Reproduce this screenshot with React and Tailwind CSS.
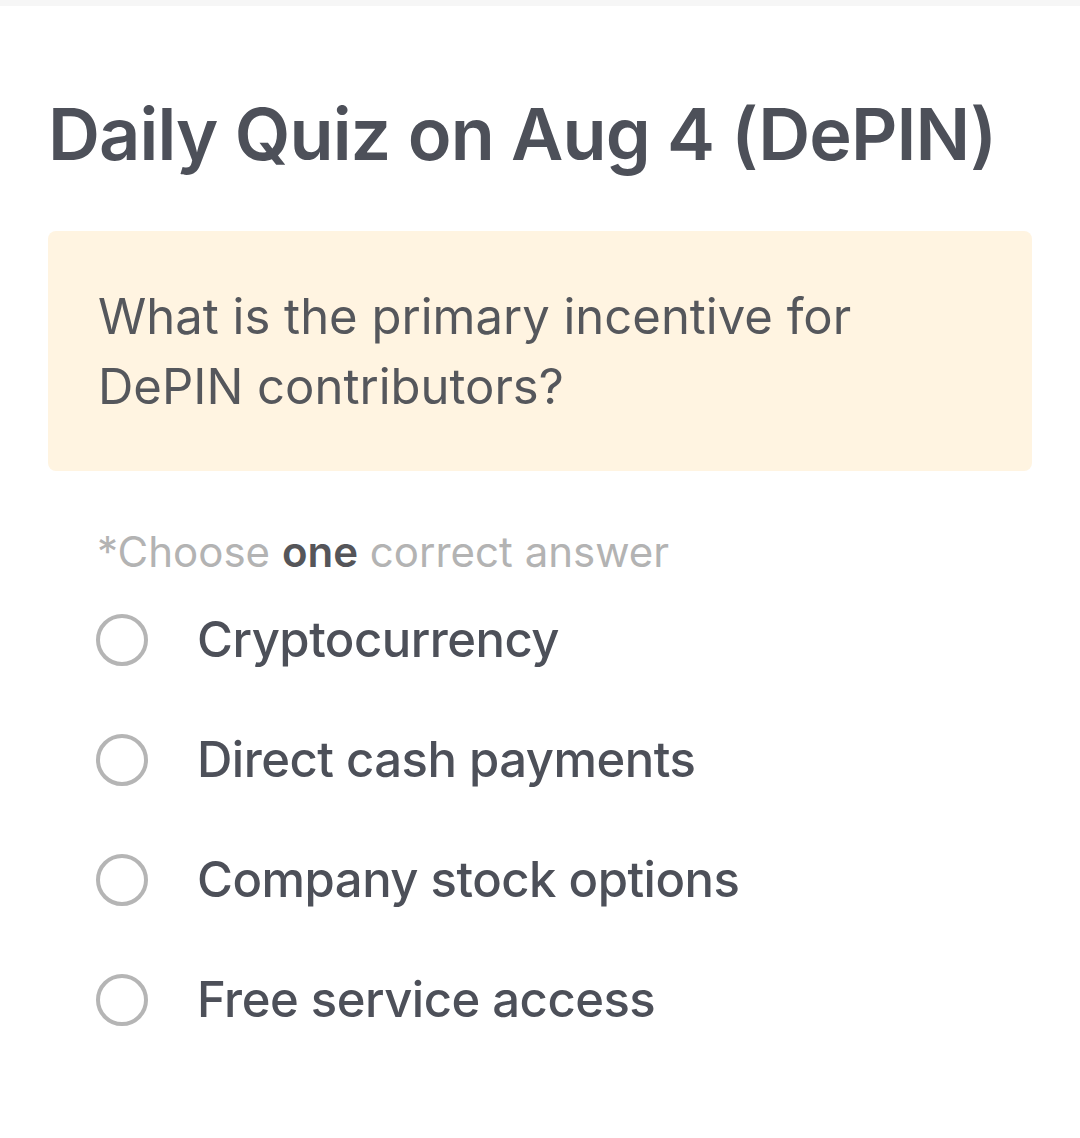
export default function App() {
  const options = [
    'Cryptocurrency',
    'Direct cash payments',
    'Company stock options',
    'Free service access',
  ];
  return (
    <div
      className="min-h-[1138px] w-[1080px] bg-white"
      style={{ fontFamily: 'Inter, "Noto Sans", sans-serif' }}
    >
      <div className="h-[6px] bg-[#f6f6f6]" />
      <div className="px-12">
        <h1 className="mt-[82px] whitespace-nowrap text-[72px] font-semibold leading-[92px] tracking-[-0.9px] text-[#4d5059]">
          Daily Quiz on Aug 4 (DePIN)
        </h1>
        <div className="mt-[51px] rounded-lg bg-[#fff4e1] px-[50px] pt-[51px] pb-[49px]">
          <p className="text-[49px] leading-[70px] text-[#55575c]">
            What is the primary incentive for
            <br />
            DePIN contributors?
          </p>
        </div>
        <p className="mt-[55px] pl-[49px] text-[42px] leading-[52px] text-[#b3b3b3]">
          *Choose <span className="font-semibold text-[#555559]">one</span> correct answer
        </p>
        <div className="mt-[2px] flex flex-col pl-[48px]">
          {options.map((o) => (
            <label key={o} className="flex h-[120px] items-center gap-[49px]">
              <span className="h-[52px] w-[52px] shrink-0 rounded-full border-[4px] border-[#b5b5b5]" />
              <span className="text-[49px] font-medium tracking-[-0.5px] text-[#4d5059]">{o}</span>
            </label>
          ))}
        </div>
      </div>
    </div>
  );
}
